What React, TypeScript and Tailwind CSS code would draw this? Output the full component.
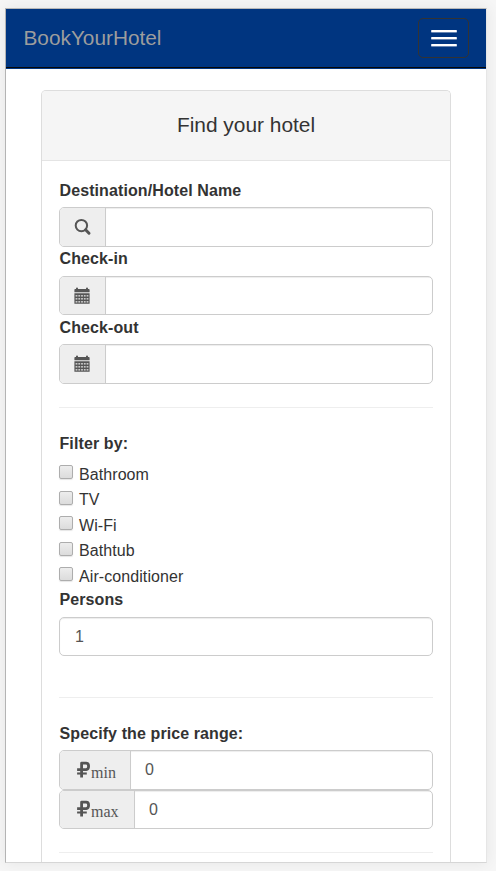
import type { ReactNode } from "react";

function SearchIcon() {
  return (
    <svg width="18" height="18" viewBox="0 0 18 18" fill="none" stroke="#555" className="block">
      <circle cx="7.4" cy="7.6" r="5.7" strokeWidth="2" />
      <path d="M11.6 11.8 L15 15.2" strokeWidth="3" strokeLinecap="round" />
    </svg>
  );
}

function CalendarIcon() {
  return (
    <svg width="16" height="18" viewBox="0 0 16 18" className="block">
      <path d="M0.4 5.2V2.8q0-.8.8-.8H2V1.6Q2 .6 3 .6t1 1V2h8v-.4q0-1 1-1t1 1V2h.8q.8 0 .8.8v2.4z" fill="#555" />
      <path d="M0.4 6.3h15.2v10.4H.4z" fill="#555" />
      {[8, 11, 14].map((y) =>
        [0, 1, 2, 3, 4].map((c) => (
          <rect key={`${y}-${c}`} x={1.6 + c * 2.75} y={y} width="1.8" height="1.6" fill="#c8c8c8" />
        )),
      )}
    </svg>
  );
}

function RubleIcon() {
  return (
    <svg width="14" height="17" viewBox="0 0 14 17" fill="none" stroke="#555" className="mb-[2px] block shrink-0">
      <path d="M4.6 16.5V2.2H9.2Q11.6 2.2 11.6 5.2T9.2 8.6H.1" strokeWidth="2.8" strokeLinejoin="round" />
      <path d="M.1 12.5H9.8" strokeWidth="2.1" />
    </svg>
  );
}

function Label({ children, className = "" }: { children: ReactNode; className?: string }) {
  return <div className={`pl-[0.5px] font-bold leading-[23px] tracking-[0.1px] text-[#333] ${className}`}>{children}</div>;
}

function InputGroup({ addon, value, className = "", addonClass }: { addon: ReactNode; value?: string; className?: string; addonClass: string }) {
  return (
    <div className={`flex overflow-hidden rounded-[5px] border border-[#ccc] bg-white ${className}`}>
      <div className={`flex shrink-0 items-center border-r border-[#ccc] bg-[#eee] text-[#555] ${addonClass}`}>{addon}</div>
      <div className="flex grow items-center px-[14px] text-[#555] shadow-[inset_0_1px_1px_rgba(0,0,0,0.075)]">{value}</div>
    </div>
  );
}

function Divider({ className }: { className: string }) {
  return <div className={`h-px bg-[#eee] ${className}`} />;
}

function MenuBar() {
  return <span className="h-[2px] w-[26px] rounded-[1px] bg-white shadow-[0_1px_0_rgba(255,255,255,0.4)]" />;
}

export default function App() {
  return (
    <div className="h-[871px] w-[496px] overflow-hidden bg-[#f6f6f6] pl-[5px] pt-2 font-['Liberation_Sans',Arial,sans-serif] text-[16px] text-[#333]">
      <div className="flex h-[855px] w-[482px] flex-col overflow-hidden border border-b-[#d6d6d6] border-l-[#b4b4b4] border-r-[#e6e6e6] border-t-[#b8b8b8] bg-white shadow-[0_0_14px_rgba(0,0,0,0.07)]">
        <header className="flex h-[60px] shrink-0 flex-col bg-[#003580]">
          <div className="flex h-[58px] items-center justify-between pl-[17.5px] pr-[17px]">
            <span className="text-[20.8px] text-[#9d9d9d]">BookYourHotel</span>
            <div className="flex h-10 w-[51px] flex-col items-center justify-center gap-[5px] rounded-[5px] border border-[#333] pb-px">
              <MenuBar />
              <MenuBar />
              <MenuBar />
            </div>
          </div>
          <div className="h-px bg-[#080808]" />
        </header>

        <section className="ml-[35px] mt-[21px] w-[410px] shrink-0 rounded-t-[5px] border border-b-0 border-[#ddd] bg-white">
          <div className="flex h-[70px] items-center justify-center rounded-t-[4px] border-b border-[#e4e4e4] bg-[#f5f5f5] text-[20.9px]">
            <h1 className="pb-px">Find your hotel</h1>
          </div>
          <div className="h-[740px] px-[17px] pt-[18px]">
            <Label>Destination/Hotel Name</Label>
            <InputGroup className="mt-[5px] h-10" addonClass="w-[46px] pl-[14px]" addon={<SearchIcon />} />
            <Label>Check-in</Label>
            <InputGroup className="mt-[6px] h-[39px]" addonClass="w-[46px] pl-[14px]" addon={<CalendarIcon />} />
            <Label className="mt-[1px]">Check-out</Label>
            <InputGroup className="mt-[5px] h-10" addonClass="w-[46px] pl-[14px]" addon={<CalendarIcon />} />
            <Divider className="mt-[23px]" />
            <Label className="mt-6">Filter by:</Label>
            <div className="mt-[7px] flex flex-col">
              {["Bathroom", "TV", "Wi-Fi", "Bathtub", "Air-conditioner"].map((name) => (
                <div key={name} className="flex h-[25.5px] items-center">
                  <span className="mb-[5px] mr-[6px] size-[14px] rounded-[2px] border border-[#adadad] bg-linear-to-b from-[#ededed] to-[#dcdcdc] shadow-[0_1px_1px_rgba(0,0,0,0.1)]" />
                  <span className="tracking-[0.08px]">{name}</span>
                </div>
              ))}
            </div>
            <Label className="-mt-[1.5px]">Persons</Label>
            <div className="mt-[6px] flex h-[39px] items-center rounded-[5px] border border-[#ccc] px-[15px] text-[#555] shadow-[inset_0_1px_1px_rgba(0,0,0,0.075)]">
              1
            </div>
            <Divider className="mt-[41px]" />
            <Label className="mt-6">Specify the price range:</Label>
            <InputGroup
              className="mt-[5px] h-10"
              addonClass="w-[71px] pl-[17px]"
              value="0"
              addon={
                <>
                  <RubleIcon />
                  <span className="pt-[5px] font-['Liberation_Serif',serif]">min</span>
                </>
              }
            />
            <InputGroup
              className="h-[39px]"
              addonClass="w-[75px] pl-[17px]"
              value="0"
              addon={
                <>
                  <RubleIcon />
                  <span className="pt-[5px] font-['Liberation_Serif',serif]">max</span>
                </>
              }
            />
            <Divider className="mt-[23px]" />
          </div>
        </section>
      </div>
    </div>
  );
}
